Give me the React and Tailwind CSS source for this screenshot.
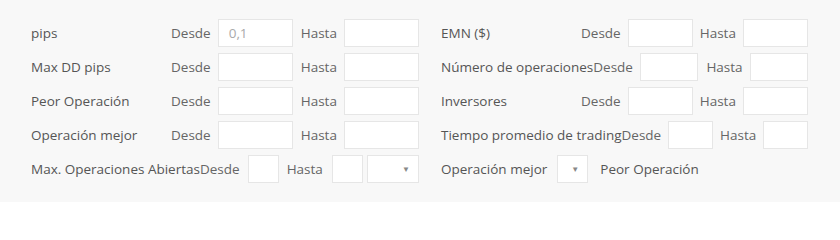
import React from "react";

const Input = ({ value, className = "" }) => (
  <div className={`h-[28px] bg-white border border-[#e6e6e6] flex items-center px-[10px] text-[#aaa] ${className}`}>
    {value}
  </div>
);

const Select = ({ className = "" }) => (
  <div className={`h-[28px] bg-white border border-[#e6e6e6] flex items-center justify-end pr-[8px] ${className}`}>
    <span className="text-[8px] text-[#888]">▼</span>
  </div>
);

const Row = ({ label, labelW = "min-w-[140px]", value, right, hastaPl = "pl-[8px]" }) => (
  <div className="flex items-center h-[28px]">
    <span className={`${labelW} shrink-0 whitespace-nowrap text-[#555]`}>{label}</span>
    <span className="shrink-0 pr-[7px]">Desde</span>
    <Input value={value} className="flex-1 min-w-0" />
    <span className={`shrink-0 ${hastaPl} pr-[7px]`}>Hasta</span>
    <Input className="flex-1 min-w-0" />
    {right}
  </div>
);

export default function App() {
  return (
    <div
      className="w-[840px] h-[202px] bg-[#f8f8f8] text-[13.5px] text-[#666]"
      style={{ fontFamily: '"Open Sans", "Liberation Sans", sans-serif' }}
    >
      <div className="flex pt-[19px] pl-[31px]">
        <div className="w-[388px] flex flex-col gap-[6px]">
          <Row label="pips" value="0,1" />
          <Row label="Max DD pips" />
          <Row label="Peor Operación" />
          <Row label="Operación mejor" />
          <div className="flex items-center h-[28px]">
            <span className="shrink-0 whitespace-nowrap text-[#555]">Max. Operaciones Abiertas</span>
            <span className="shrink-0 pr-[8px]">Desde</span>
            <Input className="w-[31px] shrink-0" />
            <span className="shrink-0 pl-[8px] pr-[8px] w-[53px]">Hasta</span>
            <Input className="w-[31px] shrink-0" />
            <Select className="ml-[4px] flex-1 min-w-0" />
          </div>
        </div>
        <div className="ml-[22px] w-[367px] flex flex-col gap-[6px]">
          <Row label="EMN ($)" hastaPl="pl-[7px]" />
          <Row label="Número de operaciones" hastaPl="pl-[8px]" />
          <Row label="Inversores" hastaPl="pl-[7px]" />
          <Row label="Tiempo promedio de trading" hastaPl="pl-[7px]" />
          <div className="flex items-center h-[28px]">
            <span className="shrink-0 whitespace-nowrap text-[#555]">Operación mejor</span>
            <Select className="ml-[10px] w-[31px] shrink-0" />
            <span className="ml-[12px] whitespace-nowrap text-[#555]">Peor Operación</span>
          </div>
        </div>
      </div>
    </div>
  );
}
